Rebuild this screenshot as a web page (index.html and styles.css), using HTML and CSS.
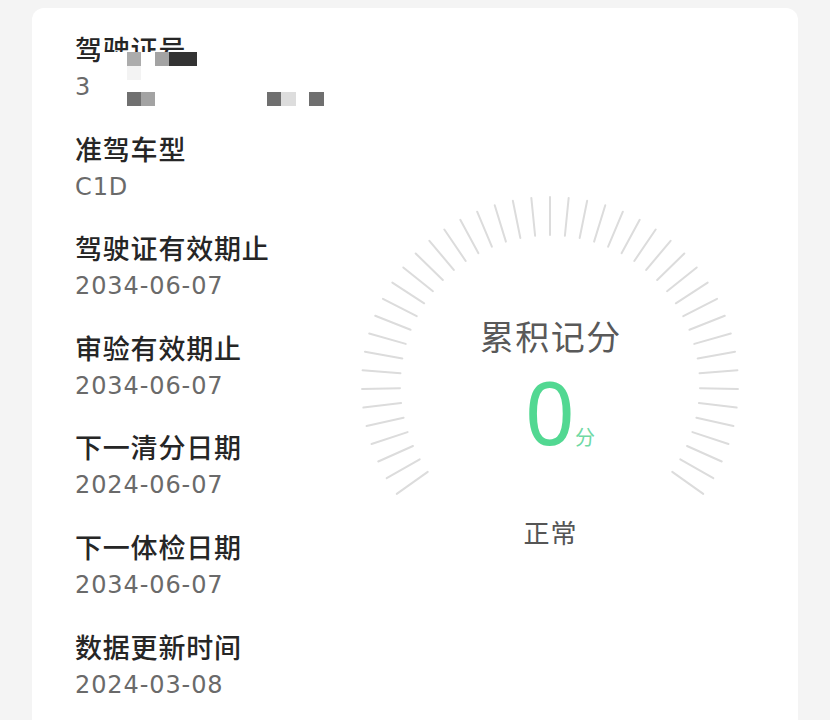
FILE: index.html
```html
<!DOCTYPE html>
<html lang="zh-CN">
<head>
<meta charset="utf-8">
<title>驾驶证信息</title>
<link rel="stylesheet" href="styles.css">
</head>
<body>
<div class="card">
  <dl class="info">
    <div class="row"><dt>驾驶证号</dt><dd>3</dd></div>
    <div class="row"><dt>准驾车型</dt><dd>C1D</dd></div>
    <div class="row"><dt>驾驶证有效期止</dt><dd>2034-06-07</dd></div>
    <div class="row"><dt>审验有效期止</dt><dd>2034-06-07</dd></div>
    <div class="row"><dt>下一清分日期</dt><dd>2024-06-07</dd></div>
    <div class="row"><dt>下一体检日期</dt><dd>2034-06-07</dd></div>
    <div class="row"><dt>数据更新时间</dt><dd>2024-03-08</dd></div>
  </dl>
  <div class="gauge">
    <svg class="ticks" viewBox="0 0 380 380" width="380" height="380" aria-hidden="true">
      <g stroke="#dcdcdc" stroke-width="2" stroke-linecap="round">
        <line x1="190" y1="2" x2="190" y2="40" transform="rotate(-125.4 190 190)"/>
        <line x1="190" y1="2" x2="190" y2="40" transform="rotate(-119.7 190 190)"/>
        <line x1="190" y1="2" x2="190" y2="40" transform="rotate(-114 190 190)"/>
        <line x1="190" y1="2" x2="190" y2="40" transform="rotate(-108.3 190 190)"/>
        <line x1="190" y1="2" x2="190" y2="40" transform="rotate(-102.6 190 190)"/>
        <line x1="190" y1="2" x2="190" y2="40" transform="rotate(-96.9 190 190)"/>
        <line x1="190" y1="2" x2="190" y2="40" transform="rotate(-91.2 190 190)"/>
        <line x1="190" y1="2" x2="190" y2="40" transform="rotate(-85.5 190 190)"/>
        <line x1="190" y1="2" x2="190" y2="40" transform="rotate(-79.8 190 190)"/>
        <line x1="190" y1="2" x2="190" y2="40" transform="rotate(-74.1 190 190)"/>
        <line x1="190" y1="2" x2="190" y2="40" transform="rotate(-68.4 190 190)"/>
        <line x1="190" y1="2" x2="190" y2="40" transform="rotate(-62.7 190 190)"/>
        <line x1="190" y1="2" x2="190" y2="40" transform="rotate(-57 190 190)"/>
        <line x1="190" y1="2" x2="190" y2="40" transform="rotate(-51.3 190 190)"/>
        <line x1="190" y1="2" x2="190" y2="40" transform="rotate(-45.6 190 190)"/>
        <line x1="190" y1="2" x2="190" y2="40" transform="rotate(-39.9 190 190)"/>
        <line x1="190" y1="2" x2="190" y2="40" transform="rotate(-34.2 190 190)"/>
        <line x1="190" y1="2" x2="190" y2="40" transform="rotate(-28.5 190 190)"/>
        <line x1="190" y1="2" x2="190" y2="40" transform="rotate(-22.8 190 190)"/>
        <line x1="190" y1="2" x2="190" y2="40" transform="rotate(-17.1 190 190)"/>
        <line x1="190" y1="2" x2="190" y2="40" transform="rotate(-11.4 190 190)"/>
        <line x1="190" y1="2" x2="190" y2="40" transform="rotate(-5.7 190 190)"/>
        <line x1="190" y1="2" x2="190" y2="40"/>
        <line x1="190" y1="2" x2="190" y2="40" transform="rotate(5.7 190 190)"/>
        <line x1="190" y1="2" x2="190" y2="40" transform="rotate(11.4 190 190)"/>
        <line x1="190" y1="2" x2="190" y2="40" transform="rotate(17.1 190 190)"/>
        <line x1="190" y1="2" x2="190" y2="40" transform="rotate(22.8 190 190)"/>
        <line x1="190" y1="2" x2="190" y2="40" transform="rotate(28.5 190 190)"/>
        <line x1="190" y1="2" x2="190" y2="40" transform="rotate(34.2 190 190)"/>
        <line x1="190" y1="2" x2="190" y2="40" transform="rotate(39.9 190 190)"/>
        <line x1="190" y1="2" x2="190" y2="40" transform="rotate(45.6 190 190)"/>
        <line x1="190" y1="2" x2="190" y2="40" transform="rotate(51.3 190 190)"/>
        <line x1="190" y1="2" x2="190" y2="40" transform="rotate(57 190 190)"/>
        <line x1="190" y1="2" x2="190" y2="40" transform="rotate(62.7 190 190)"/>
        <line x1="190" y1="2" x2="190" y2="40" transform="rotate(68.4 190 190)"/>
        <line x1="190" y1="2" x2="190" y2="40" transform="rotate(74.1 190 190)"/>
        <line x1="190" y1="2" x2="190" y2="40" transform="rotate(79.8 190 190)"/>
        <line x1="190" y1="2" x2="190" y2="40" transform="rotate(85.5 190 190)"/>
        <line x1="190" y1="2" x2="190" y2="40" transform="rotate(91.2 190 190)"/>
        <line x1="190" y1="2" x2="190" y2="40" transform="rotate(96.9 190 190)"/>
        <line x1="190" y1="2" x2="190" y2="40" transform="rotate(102.6 190 190)"/>
        <line x1="190" y1="2" x2="190" y2="40" transform="rotate(108.3 190 190)"/>
        <line x1="190" y1="2" x2="190" y2="40" transform="rotate(114 190 190)"/>
        <line x1="190" y1="2" x2="190" y2="40" transform="rotate(119.7 190 190)"/>
        <line x1="190" y1="2" x2="190" y2="40" transform="rotate(125.4 190 190)"/>
      </g>
    </svg>
    <div class="g-title">累积记分</div>
    <div class="g-score"><span class="g-pad"></span><span class="g-num">0</span><span class="g-unit">分</span></div>
    <div class="g-status">正常</div>
  </div>
  <div class="mask" aria-hidden="true">
    <span class="cell c1"></span>
    <span class="cell c2"></span>
    <span class="cell c3"></span>
    <span class="cell c4"></span>
    <span class="cell c5"></span>
    <span class="cell c6"></span>
    <span class="cell c7"></span>
    <span class="cell c8"></span>
    <span class="cell c9"></span>
  </div>
</div>
</body>
</html>
```
FILE: styles.css
```css
* { box-sizing: border-box; }

html, body {
  margin: 0;
  padding: 0;
}

html {
  overflow: hidden;
}

body {
  background: #f4f4f4;
  font-family: "Noto Sans CJK SC", "Noto Sans", sans-serif;
}

.card {
  position: relative;
  margin: 8px 0 0 32px;
  width: 766px;
  min-height: 724px;
  background: #ffffff;
  border-radius: 12px 12px 0 0;
  padding: 22px 0 0 43px;
  display: flex;
  align-items: flex-start;
}

.info {
  width: 285px;
  margin: 0;
  display: flex;
  flex-direction: column;
  gap: 26.6px;
}

.row {
  display: flex;
  flex-direction: column;
}

.row dt {
  font-family: "Noto Sans CJK SC", sans-serif;
  font-weight: 500;
  font-size: 27px;
  line-height: 38px;
  letter-spacing: 0.8px;
  color: #262626;
  white-space: nowrap;
}

.row dd {
  margin: 3px 0 0 0;
  font-family: "DejaVu Sans", "Noto Sans", sans-serif;
  font-size: 24px;
  line-height: 32px;
  letter-spacing: 0.9px;
  color: #6a6a6a;
}

.gauge {
  position: relative;
  width: 380px;
  height: 380px;
  margin-top: 165px;
  display: flex;
  flex-direction: column;
  align-items: center;
  padding-top: 121px;
}

.ticks {
  position: absolute;
  left: 0;
  top: 0;
}

.g-title {
  position: relative;
  font-size: 34px;
  line-height: 40px;
  letter-spacing: 1.5px;
  color: #595959;
  padding-left: 1.5px;
}

.g-score {
  position: relative;
  width: 100%;
  margin-top: 10.8px;
  display: grid;
  grid-template-columns: 1fr auto 1fr;
  align-items: baseline;
}

.g-num {
  font-family: "Noto Sans", sans-serif;
  font-size: 87px;
  line-height: 88px;
  color: #52d892;
}

.g-unit {
  font-family: "Noto Sans CJK SC", sans-serif;
  font-size: 20px;
  line-height: 24px;
  color: #6fd9a4;
}

.g-status {
  position: relative;
  margin-top: 61px;
  font-size: 26px;
  line-height: 32px;
  letter-spacing: 1px;
  padding-left: 1px;
  color: #555555;
}

.mask {
  position: absolute;
  left: 68px;
  top: 43.7px;
  width: 232px;
  height: 58px;
  background: #ffffff;
}

.cell {
  position: absolute;
  width: 14.3px;
  height: 14.3px;
}

.c1 { left: 26.7px; top: 0; background: #acacac; }
.c2 { left: 55px; top: 0; background: #a3a3a3; }
.c3 { left: 69.3px; top: 0; width: 27.4px; background: #333333; }
.c4 { left: 26.7px; top: 14.3px; background: #f3f3f3; }
.c5 { left: 26.7px; top: 40px; background: #707070; }
.c6 { left: 41px; top: 40px; background: #a3a3a3; }
.c7 { left: 167.3px; top: 40px; background: #6f6f6f; }
.c8 { left: 181.3px; top: 40px; background: #dddddd; }
.c9 { left: 209.3px; top: 40px; background: #6f6f6f; }
```
